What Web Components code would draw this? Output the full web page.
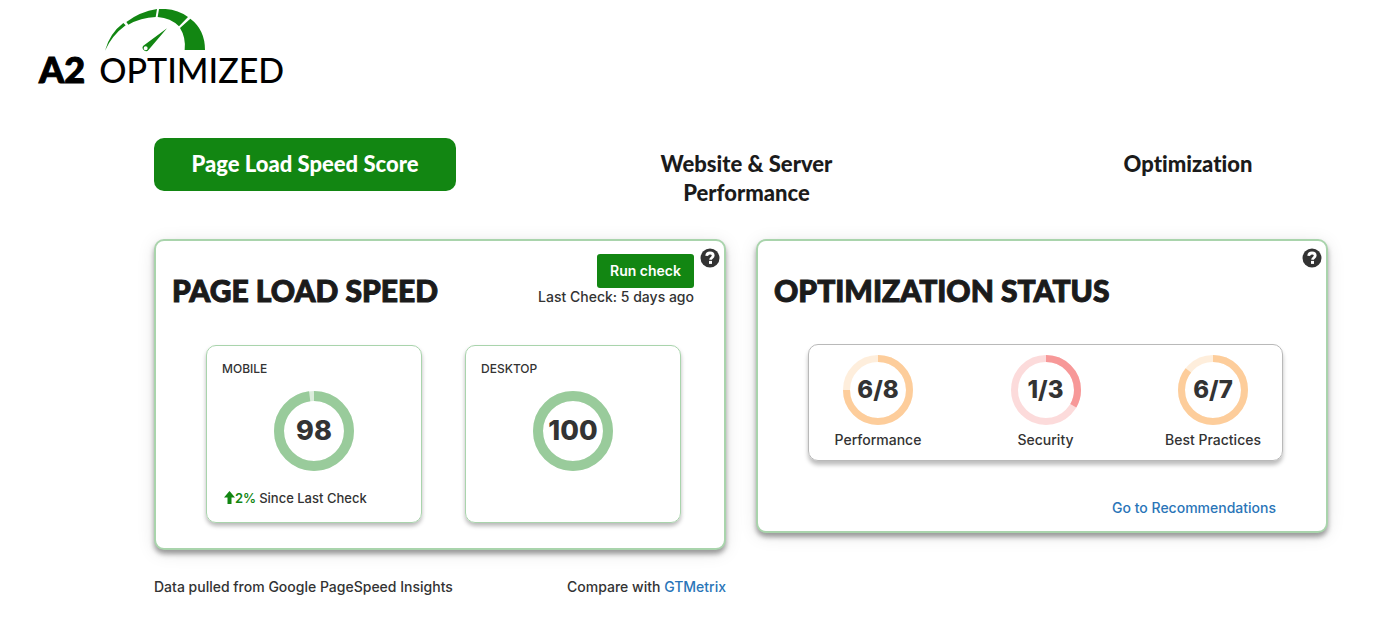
<!DOCTYPE html>
<html lang="en">
<head>
<meta charset="utf-8">
<title>A2 Optimized</title>
<style>
  body { margin: 0; background: #fff; color: #333; font: 500 14px/20px Inter, "Open Sans", sans-serif; }
</style>
</head>
<body>
<a2-dashboard></a2-dashboard>
<script>
const define = (name, html, setup) => {
  const template = document.createElement('template');
  template.innerHTML = '<style>*{box-sizing:border-box}a{color:#2a75b8;text-decoration:none}</style>' + html;
  customElements.define(name, class extends HTMLElement {
    constructor() {
      super();
      this.attachShadow({ mode: 'open' }).append(template.content.cloneNode(true));
    }
    connectedCallback() { if (setup) setup(this, this.shadowRoot); }
  });
};

define('a2-logo', `
  <style>
    :host { display: block; padding: 9px 0 0 39px; color: #000; }
    svg { display: block; margin-left: 66px; }
    .word { display: flex; align-items: baseline; gap: 14px; height: 40px; font: 500 34px/34px Lato, sans-serif; }
    b { font-size: 36px; font-weight: 900; -webkit-text-stroke: 1px #000; }
  </style>
  <svg width="100" height="43" viewBox="225 26 300 129" fill="#128612" aria-hidden="true">
    <path d="M225 151Q239 99 280 68L287 75Q246 105 225 151Z"/>
    <path d="M289 65Q330 34 381 26L377 50Q332 52 295 73Z"/>
    <path d="M387 26Q438 23 474 50L447 78Q422 53 383 50Z"/>
    <path d="M481 55Q525 88 525 149H464Q468 111 450 83Z"/>
    <path fill-rule="evenodd" d="M411 84L356 148A10 10 0 1 1 340 136ZM347 138a6 6 0 1 0 0 12a6 6 0 1 0 0-12Z"/>
  </svg>
  <div class="word"><b>A2</b><span>OPTIMIZED</span></div>
`);

define('a2-tab', `
  <style>
    :host { display: block; flex: 0 1 302px; }
    button { width: 100%; padding: 11px 32px 13px; border: 0; border-radius: 10px; background: none;
      color: #1b1b1b; font: 900 22px/29px Lato, sans-serif; font-variant-ligatures: none; text-align: center; }
    :host([active]) button { background: #128612; color: #fff; }
  </style>
  <button type="button"><slot></slot></button>
`);

define('a2-help', `
  <style>
    :host { display: block; }
    button { display: block; padding: 0; border: 0; background: none; }
    svg { display: block; }
  </style>
  <button type="button" aria-label="Help">
    <svg width="20" height="20" viewBox="0 0 20 20" aria-hidden="true">
      <circle cx="10" cy="10" r="9.5" fill="#333"/>
      <path d="M6.7 7.9C6.9 5.8 8.2 5 10 5c1.8 0 3.2.9 3.2 2.6 0 2.2-2.6 2.1-2.6 4.2" fill="none" stroke="#fff" stroke-width="2.8"/>
      <path d="M9 12.9h3v3H9z" fill="#fff"/>
    </svg>
  </button>
`);

define('a2-ring', `
  <style>
    :host { display: inline-grid; place-items: center; color: #333; }
    svg, span { grid-area: 1 / 1; }
    svg { display: block; }
    circle { fill: none; stroke: var(--ring); }
    .track { opacity: .35; }
    span { font: 800 27px/38px Inter, sans-serif; }
    :host([small]) span { font-size: 24px; }
  </style>
  <svg aria-hidden="true"><circle class="track"/><circle class="value" pathLength="100"/></svg>
  <span><slot></slot></span>
`, (host, root) => {
  const small = host.hasAttribute('small');
  const size = small ? 70 : 80, stroke = small ? 7 : 10;
  const svg = root.querySelector('svg');
  svg.setAttribute('width', size);
  svg.setAttribute('height', size);
  root.querySelectorAll('circle').forEach(c => {
    c.setAttribute('cx', size / 2);
    c.setAttribute('cy', size / 2);
    c.setAttribute('r', (size - stroke) / 2);
    c.setAttribute('stroke-width', stroke);
  });
  const value = root.querySelector('.value');
  value.setAttribute('transform', 'rotate(-90 ' + size / 2 + ' ' + size / 2 + ')');
  value.setAttribute('stroke-dasharray', host.getAttribute('value') + ' 100');
});

define('a2-card', `
  <style>
    :host { display: block; border: 2px solid #a9d4ac; border-radius: 10px; background: #fff;
      box-shadow: 0 4px 5px rgba(0,0,0,.36), 0 3px 18px rgba(0,0,0,.1); }
    header { display: flex; align-items: flex-start; height: 102px; padding: 7px 4px 0 16px; }
    h2 { flex: 1; margin: 24px 0 0; color: #1b1b1b; font: 900 30px/36px Lato, sans-serif; text-transform: uppercase;
      -webkit-text-stroke: 1px #1b1b1b; }
  </style>
  <header><h2><slot name="title"></slot></h2><slot name="action"></slot><a2-help></a2-help></header>
  <slot></slot>
`);

define('a2-check', `
  <style>
    :host { display: block; margin: 6px 6px 0 0; text-align: right; line-height: 18px; }
    button { display: block; margin-left: auto; height: 34px; padding: 0 13px; border: 0; border-radius: 3px;
      background: #128612; color: #fff; font: 600 14px/34px Inter, sans-serif; }
  </style>
  <button type="button">Run check</button>
  <div><slot></slot></div>
`);

define('a2-score', `
  <style>
    :host { display: flex; flex-direction: column; flex: 0 1 216px; height: 178px; padding: 13px 15px 14px;
      border: 1px solid #a9d4ac; border-radius: 10px; box-shadow: 0 3px 4px rgba(0,0,0,.28); }
    a2-ring { align-self: center; margin-top: 12px; --ring: #99cb9b; }
    .label { font-size: 12px; }
    footer { margin-top: auto; }
  </style>
  <div class="label"><slot name="label"></slot></div>
  <a2-ring></a2-ring>
  <footer><slot></slot></footer>
`, (host, root) => {
  const ring = document.createElement('a2-ring');
  ring.textContent = host.getAttribute('value');
  ring.setAttribute('value', host.getAttribute('value'));
  root.querySelector('a2-ring').replaceWith(ring);
});

define('a2-change', `
  <style>
    :host { display: flex; align-items: center; padding-left: 2px; font-size: 13px; }
    b { margin-right: 3px; color: #128612; font-weight: 600; }
    svg { display: block; }
  </style>
  <svg width="11" height="14" viewBox="0 0 11 14" aria-hidden="true"><path d="M5.5 0 11 6.5H7.5V13H3.5V6.5H0Z" fill="#128612"/></svg>
  <b><slot name="amount"></slot></b><slot></slot>
`);

define('a2-status', `
  <style>
    :host { display: flex; flex-direction: column; align-items: center; flex: 0 0 100px; white-space: nowrap; }
    div { margin-top: 5px; }
  </style>
  <slot name="ring"></slot>
  <div><slot></slot></div>
`);

define('a2-dashboard', `
  <style>
    :host { display: block; }
    nav { display: flex; justify-content: space-between; margin: 46px 42px 0 154px; }
    main { display: grid; grid-template-columns: 1fr 1fr; gap: 30px; align-items: start; margin: 19px 53px 0 154px; }
    .scores { display: flex; justify-content: space-between; gap: 20px; padding: 2px 43px 25px 50px; }
    .statuses { display: flex; justify-content: space-between; height: 117px; margin: 1px 43px 0 50px; padding: 10px 19px;
      border: 1px solid #b9b9b9; border-radius: 10px; box-shadow: 0 4px 4px rgba(0,0,0,.26); }
    .go { margin: 37px 50px 13px; text-align: right; }
    .notes { display: flex; justify-content: space-between; margin-top: 27px; }
  </style>
  <a2-logo></a2-logo>
  <nav>
    <a2-tab active>Page Load Speed Score</a2-tab>
    <a2-tab>Website &amp; Server Performance</a2-tab>
    <a2-tab>Optimization</a2-tab>
  </nav>
  <main>
    <section>
      <a2-card>
        <span slot="title">Page Load Speed</span>
        <a2-check slot="action">Last Check: 5 days ago</a2-check>
        <div class="scores">
          <a2-score value="98"><span slot="label">MOBILE</span><a2-change><span slot="amount">2%</span>Since Last Check</a2-change></a2-score>
          <a2-score value="100"><span slot="label">DESKTOP</span></a2-score>
        </div>
      </a2-card>
      <div class="notes"><span>Data pulled from Google PageSpeed Insights</span><span>Compare with <a href="#gtmetrix">GTMetrix</a></span></div>
    </section>
    <a2-card>
      <span slot="title">Optimization Status</span>
      <div class="statuses">
        <a2-status><a2-ring slot="ring" small value="75" style="--ring:#fdcd9b">6/8</a2-ring>Performance</a2-status>
        <a2-status><a2-ring slot="ring" small value="33.3" style="--ring:#f79898">1/3</a2-ring>Security</a2-status>
        <a2-status><a2-ring slot="ring" small value="85.7" style="--ring:#fdcd9b">6/7</a2-ring>Best Practices</a2-status>
      </div>
      <div class="go"><a href="#recommendations">Go to Recommendations</a></div>
    </a2-card>
  </main>
`);
</script>
</body>
</html>
